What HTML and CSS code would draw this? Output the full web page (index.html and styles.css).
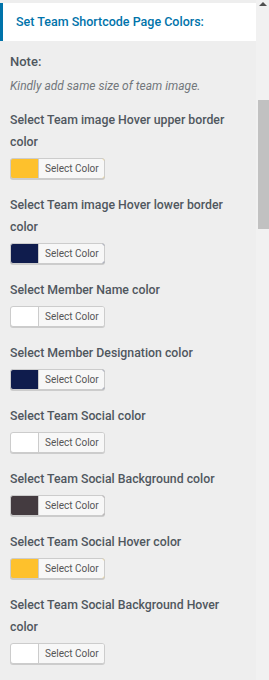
FILE: index.html
```html
<!DOCTYPE html>
<html lang="en">
  <head>
    <meta charset="UTF-8" />
    <meta name="viewport" content="width=device-width, initial-scale=1.0" />
    <title>Team Shortcode Colors</title>
    <link rel="stylesheet" href="styles.css">
  </head>
  <body>
    <div class="frame">
      <div class="panel">
        <h3 class="panel-title">Set Team Shortcode Page Colors:</h3>
        <div class="panel-body">
          <div class="note">
            <div class="note-head">Note:</div>
            <div class="note-text">Kindly add same size of team image.</div>
          </div>

          <div class="field">
            <label>Select Team image Hover upper border color</label>
            <button class="color-result swatch-yellow"><span>Select Color</span></button>
          </div>
          <div class="field">
            <label>Select Team image Hover lower border color</label>
            <button class="color-result swatch-navy"><span>Select Color</span></button>
          </div>
          <div class="field">
            <label>Select Member Name color</label>
            <button class="color-result swatch-white"><span>Select Color</span></button>
          </div>
          <div class="field">
            <label>Select Member Designation color</label>
            <button class="color-result swatch-navy"><span>Select Color</span></button>
          </div>
          <div class="field">
            <label>Select Team Social color</label>
            <button class="color-result swatch-white"><span>Select Color</span></button>
          </div>
          <div class="field">
            <label>Select Team Social Background color</label>
            <button class="color-result swatch-dark"><span>Select Color</span></button>
          </div>
          <div class="field">
            <label>Select Team Social Hover color</label>
            <button class="color-result swatch-yellow"><span>Select Color</span></button>
          </div>
          <div class="field">
            <label>Select Team Social Background Hover color</label>
            <button class="color-result swatch-white"><span>Select Color</span></button>
          </div>
        </div>
      </div>
      <div class="scrollbar">
        <div class="scroll-up"></div>
        <div class="scroll-thumb"></div>
      </div>
    </div>
  </body>
</html>
```

FILE: styles.css
```css
body {
  margin: 0;
  padding: 0;
  background-color: #eeeeee;
  font-family: Roboto, "Liberation Sans", Arial, sans-serif;
  color: #50575e;
}

.frame {
  display: flex;
  height: 680px;
  overflow: hidden;
}

.panel {
  flex: 1;
  min-width: 0;
}

.panel-title {
  margin: 3px 0 0;
  height: 38px;
  line-height: 38px;
  background-color: #fff;
  border-left: 3px solid #0073aa;
  padding-left: 13px;
  font-size: 12.5px;
  font-weight: 500;
  color: #0073aa;
}

.panel-body {
  padding: 9px 10px 0;
}

.note {
  line-height: 24px;
  margin-bottom: 11px;
}

.note-head {
  font-size: 13px;
  font-weight: 500;
}

.note-text {
  font-size: 12px;
  font-style: italic;
  color: #72777c;
}

.field {
  margin-bottom: 15px;
}

.field label {
  display: block;
  font-size: 12.3px;
  font-weight: 500;
  line-height: 22px;
  margin-bottom: 5px;
  color: #50575e;
}

.color-result {
  display: block;
  height: 21px;
  margin: 0;
  padding: 0 0 0 27px;
  border: 1px solid #ccc;
  border-radius: 3px;
  box-shadow: 0 1px 0 #ccc;
  cursor: pointer;
  font-family: Roboto, "Liberation Sans", Arial, sans-serif;
}

.color-result span {
  display: block;
  height: 19px;
  line-height: 19px;
  padding: 0 5px 0 6px;
  background-color: #f7f7f7;
  border-left: 1px solid #ccc;
  border-radius: 0 2px 2px 0;
  font-size: 10px;
  color: #555;
}

.swatch-yellow {
  background-color: #fec12c;
}

.swatch-navy {
  background-color: #0f1c4d;
}

.swatch-white {
  background-color: #fff;
}

.swatch-dark {
  background-color: #443b40;
}

.scrollbar {
  width: 13px;
  background-color: #f1f1f1;
  display: flex;
  flex-direction: column;
  align-items: flex-end;
}

.scroll-up {
  align-self: center;
  width: 0;
  height: 0;
  margin-top: 2px;
  border-left: 4px solid transparent;
  border-right: 4px solid transparent;
  border-bottom: 4px solid #505050;
}

.scroll-thumb {
  width: 11px;
  height: 129px;
  margin-top: 94px;
  background-color: #c1c1c1;
}
```
